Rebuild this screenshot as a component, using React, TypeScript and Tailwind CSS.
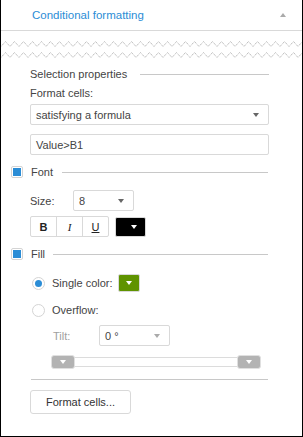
import React from 'react';

const DownArrow: React.FC<{ color?: string }> = ({ color = 'border-t-[#666]' }) => (
  <span className={`w-0 h-0 border-l-[3px] border-r-[3px] border-t-[4px] border-l-transparent border-r-transparent ${color}`} />
);

const Check: React.FC = () => (
  <span className="w-[12px] h-[12px] border border-[#d4d4d4] rounded-[2px] bg-white flex items-center justify-center">
    <span className="w-[8px] h-[8px] bg-[#2b8dd6]" />
  </span>
);

const Radio: React.FC<{ on?: boolean }> = ({ on }) => (
  <span className="w-[13px] h-[13px] rounded-full border border-[#d4d4d4] bg-white flex items-center justify-center">
    {on && <span className="w-[7px] h-[7px] rounded-full bg-[#2b8dd6]" />}
  </span>
);

const Zigzag: React.FC = () => {
  const pts: string[] = [];
  for (let x = 0, i = 0; x <= 310; x += 4.5, i++) pts.push(`${x},${i % 2 ? 0.5 : 5.5}`);
  return (
    <svg width="301" height="6" className="block">
      <polyline points={pts.join(' ')} fill="none" stroke="#b4b4b4" strokeWidth="1" strokeDasharray="1.2 0.8" />
    </svg>
  );
};

const App: React.FC = () => {
  return (
    <div
      className="w-[303px] h-[437px] bg-white border-l border-r border-b border-black text-[11px] leading-[14px] text-[#444]"
      style={{ fontFamily: '"Liberation Sans", Arial, sans-serif' }}
    >
      {/* header */}
      <div className="h-[31px] border-b border-[#d9d9d9] flex items-center pl-[31px] pr-[16px]">
        <span className="text-[#2b8dd6] text-[11.5px]">Conditional formatting</span>
        <span className="ml-auto w-0 h-0 border-l-[3px] border-r-[3px] border-b-[4px] border-l-transparent border-r-transparent border-b-[#aaa]" />
      </div>

      <div className="h-[36px] pt-[10px] flex flex-col gap-[5px]">
        <Zigzag />
        <Zigzag />
      </div>

      <div className="pl-[29px] w-[268px]">
        <div className="flex items-center gap-[13px]">
          <span>Selection properties</span>
          <span className="flex-1 h-px bg-[#c8c8c8]" />
        </div>
        <div className="mt-[5px]">Format cells:</div>
        <div className="mt-[4px] h-[21px] border border-[#d9d9d9] rounded-[2px] flex items-center pl-[5px] pr-[9px]">
          <span>satisfying a formula</span>
          <span className="ml-auto flex"><DownArrow /></span>
        </div>
        <div className="mt-[9px] h-[21px] border border-[#d9d9d9] rounded-[2px] flex items-center pl-[5px]">
          Value&gt;B1
        </div>
      </div>

      {/* Font section */}
      <div className="pl-[10px] w-[267px] mt-[10px] flex items-center">
        <Check />
        <span className="ml-[8px]">Font</span>
        <span className="ml-[9px] flex-1 h-px bg-[#c8c8c8]" />
      </div>
      <div className="pl-[29px] mt-[11px] flex items-center">
        <span className="w-[43px]">Size:</span>
        <div className="w-[61px] h-[21px] border border-[#d9d9d9] rounded-[2px] flex items-center pl-[5px] pr-[9px]">
          <span>8</span>
          <span className="ml-auto flex"><DownArrow /></span>
        </div>
      </div>
      <div className="pl-[29px] mt-[5px] flex items-center">
        <div className="flex h-[21px] border border-[#d9d9d9] rounded-[2px]">
          <span className="w-[26px] flex items-center justify-center font-bold text-[#222] border-r border-[#d9d9d9]">B</span>
          <span className="w-[26px] flex items-center justify-center italic text-[#222] border-r border-[#d9d9d9]" style={{ fontFamily: '"Liberation Serif", serif' }}>I</span>
          <span className="w-[25px] flex items-center justify-center underline text-[#222]">U</span>
        </div>
        <div className="ml-[6px] w-[31px] h-[20px] bg-black border border-[#d9d9d9] rounded-[2px] flex items-center justify-end pr-[8px]">
          <DownArrow color="border-t-white" />
        </div>
      </div>

      {/* Fill section */}
      <div className="pl-[10px] w-[267px] mt-[10px] flex items-center">
        <Check />
        <span className="ml-[8px]">Fill</span>
        <span className="ml-[8px] flex-1 h-px bg-[#c8c8c8]" />
      </div>
      <div className="pl-[31px] mt-[13px] flex items-center h-[18px]">
        <Radio on />
        <span className="ml-[7px]">Single color:</span>
        <div className="ml-[5px] w-[22px] h-[18px] bg-[#5f9300] border border-[#d9d9d9] rounded-[2px] flex items-center justify-center">
          <DownArrow color="border-t-white" />
        </div>
      </div>
      <div className="pl-[31px] mt-[11px] flex items-center">
        <Radio />
        <span className="ml-[7px]">Overflow:</span>
      </div>
      <div className="pl-[52px] mt-[8px] flex items-center">
        <span className="w-[46px] text-[#a0a0a0]">Tilt:</span>
        <div className="w-[71px] h-[21px] border border-[#d9d9d9] rounded-[2px] flex items-center pl-[5px] pr-[9px]">
          <span>0 °</span>
          <span className="ml-auto flex"><DownArrow color="border-t-[#aaa]" /></span>
        </div>
      </div>
      <div className="ml-[50px] mt-[9px] w-[210px] h-[14px] flex items-center">
        <div className="w-[24px] h-[14px] bg-[#b3b3b3] border border-[#e0e0e0] rounded-[3px] flex items-center justify-center">
          <DownArrow color="border-t-white" />
        </div>
        <div className="flex-1 h-[10px] border-y border-[#dcdcdc] bg-white" />
        <div className="w-[24px] h-[14px] bg-[#b3b3b3] border border-[#e0e0e0] rounded-[3px] flex items-center justify-center">
          <DownArrow color="border-t-white" />
        </div>
      </div>
      <div className="ml-[30px] mt-[10px] w-[237px] h-px bg-[#c8c8c8]" />
      <div className="ml-[29px] mt-[10px] w-[101px] h-[24px] border border-[#d9d9d9] rounded-[3px] flex items-center justify-center text-[#333]">
        Format cells...
      </div>
    </div>
  );
};

export default App;
